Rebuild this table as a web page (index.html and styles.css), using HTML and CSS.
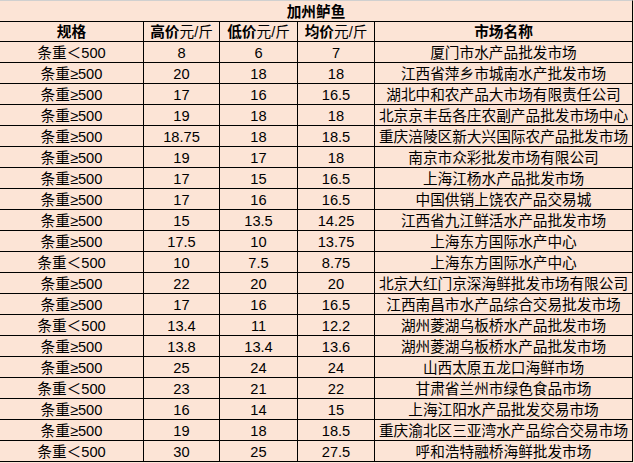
FILE: index.html
```html
<!DOCTYPE html>
<html lang="zh-CN">
<head>
<meta charset="utf-8">
<title>加州鲈鱼</title>
<link rel="stylesheet" href="styles.css">
</head>
<body>
<div class="sheet">
  <div class="title">加州鲈鱼</div>
  <div class="cell head"><b>规格</b></div>
  <div class="cell head"><b>高价</b>元/斤</div>
  <div class="cell head"><b>低价</b>元/斤</div>
  <div class="cell head"><b>均价</b>元/斤</div>
  <div class="cell head"><b>市场名称</b></div>

  <div class="cell">条重＜500</div><div class="cell">8</div><div class="cell">6</div><div class="cell">7</div><div class="cell">厦门市水产品批发市场</div>
  <div class="cell">条重≥500</div><div class="cell">20</div><div class="cell">18</div><div class="cell">18</div><div class="cell">江西省萍乡市城南水产批发市场</div>
  <div class="cell">条重≥500</div><div class="cell">17</div><div class="cell">16</div><div class="cell">16.5</div><div class="cell">湖北中和农产品大市场有限责任公司</div>
  <div class="cell">条重≥500</div><div class="cell">19</div><div class="cell">18</div><div class="cell">18</div><div class="cell">北京京丰岳各庄农副产品批发市场中心</div>
  <div class="cell">条重≥500</div><div class="cell">18.75</div><div class="cell">18</div><div class="cell">18.5</div><div class="cell">重庆涪陵区新大兴国际农产品批发市场</div>
  <div class="cell">条重≥500</div><div class="cell">19</div><div class="cell">17</div><div class="cell">18</div><div class="cell">南京市众彩批发市场有限公司</div>
  <div class="cell">条重≥500</div><div class="cell">17</div><div class="cell">15</div><div class="cell">16.5</div><div class="cell">上海江杨水产品批发市场</div>
  <div class="cell">条重≥500</div><div class="cell">17</div><div class="cell">16</div><div class="cell">16.5</div><div class="cell">中国供销上饶农产品交易城</div>
  <div class="cell">条重≥500</div><div class="cell">15</div><div class="cell">13.5</div><div class="cell">14.25</div><div class="cell">江西省九江鲜活水产品批发市场</div>
  <div class="cell">条重≥500</div><div class="cell">17.5</div><div class="cell">10</div><div class="cell">13.75</div><div class="cell">上海东方国际水产中心</div>
  <div class="cell">条重＜500</div><div class="cell">10</div><div class="cell">7.5</div><div class="cell">8.75</div><div class="cell">上海东方国际水产中心</div>
  <div class="cell">条重≥500</div><div class="cell">22</div><div class="cell">20</div><div class="cell">20</div><div class="cell">北京大红门京深海鲜批发市场有限公司</div>
  <div class="cell">条重≥500</div><div class="cell">17</div><div class="cell">16</div><div class="cell">16.5</div><div class="cell">江西南昌市水产品综合交易批发市场</div>
  <div class="cell">条重＜500</div><div class="cell">13.4</div><div class="cell">11</div><div class="cell">12.2</div><div class="cell">湖州菱湖乌板桥水产品批发市场</div>
  <div class="cell">条重≥500</div><div class="cell">13.8</div><div class="cell">13.4</div><div class="cell">13.6</div><div class="cell">湖州菱湖乌板桥水产品批发市场</div>
  <div class="cell">条重≥500</div><div class="cell">25</div><div class="cell">24</div><div class="cell">24</div><div class="cell">山西太原五龙口海鲜市场</div>
  <div class="cell">条重＜500</div><div class="cell">23</div><div class="cell">21</div><div class="cell">22</div><div class="cell">甘肃省兰州市绿色食品市场</div>
  <div class="cell">条重≥500</div><div class="cell">16</div><div class="cell">14</div><div class="cell">15</div><div class="cell">上海江阳水产品批发交易市场</div>
  <div class="cell">条重≥500</div><div class="cell">19</div><div class="cell">18</div><div class="cell">18.5</div><div class="cell">重庆渝北区三亚湾水产品综合交易市场</div>
  <div class="cell">条重＜500</div><div class="cell">30</div><div class="cell">25</div><div class="cell">27.5</div><div class="cell">呼和浩特融桥海鲜批发市场</div>
</div>
</body>
</html>
```
FILE: styles.css
```css
html, body {
  margin: 0;
  padding: 0;
  background: #fce4d6;
}

.sheet {
  display: grid;
  grid-template-columns: 144px 76px 78px 77px 258px;
  grid-auto-rows: 21px;
  width: 633px;
  font-family: "Liberation Sans", "Noto Sans CJK SC", sans-serif;
  font-size: 14.67px;
  color: #000;
}

.title {
  grid-column: 1 / -1;
  height: 22px;
  box-sizing: border-box;
  border-top: 1px solid #d0d0d0;
  border-right: 1px solid #000;
  border-bottom: 1px solid #000;
  text-align: center;
  font-weight: bold;
  line-height: 18px;
  padding-top: 2px;
}

.cell {
  box-sizing: border-box;
  border-right: 1px solid #000;
  border-bottom: 1px solid #000;
  text-align: center;
  white-space: nowrap;
  overflow: hidden;
  line-height: 18px;
  padding-top: 2px;
}

.head b {
  font-weight: bold;
}
```
